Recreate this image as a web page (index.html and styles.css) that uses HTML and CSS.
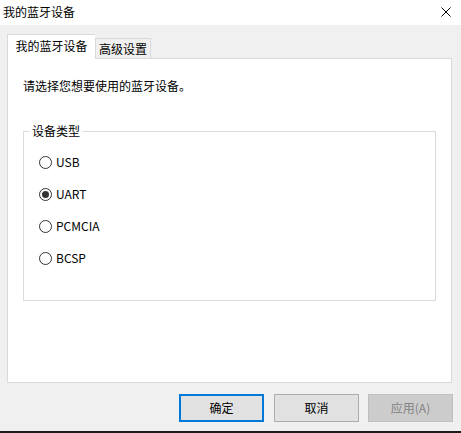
FILE: index.html
```html
<!DOCTYPE html>
<html lang="zh-CN">
<head>
<meta charset="utf-8">
<title>我的蓝牙设备</title>
<link rel="stylesheet" href="styles.css">
</head>
<body>
<div class="window">
  <div class="titlebar">
    <span class="title">我的蓝牙设备</span>
    <svg class="close" width="10" height="10" viewBox="0 0 10 10"><path d="M0.5 0.5 L9.5 9.5 M9.5 0.5 L0.5 9.5" stroke="#000" stroke-width="1"/></svg>
  </div>
  <div class="content">
    <div class="tabs">
      <div class="tab active">我的蓝牙设备</div>
      <div class="tab">高级设置</div>
    </div>
    <div class="panel">
      <p class="hint">请选择您想要使用的蓝牙设备。</p>
      <fieldset class="group">
        <legend>设备类型</legend>
        <div class="option"><span class="radio"></span><span>USB</span></div>
        <div class="option"><span class="radio checked"></span><span>UART</span></div>
        <div class="option"><span class="radio"></span><span>PCMCIA</span></div>
        <div class="option"><span class="radio"></span><span>BCSP</span></div>
      </fieldset>
    </div>
    <div class="buttons">
      <div class="btn default">确定</div>
      <div class="btn">取消</div>
      <div class="btn disabled">应用(A)</div>
    </div>
  </div>
  <div class="bottomline"></div>
</div>
</body>
</html>
```
FILE: styles.css
```css
* { box-sizing: border-box; }
html, body { margin: 0; padding: 0; }
body {
  width: 461px;
  height: 433px;
  overflow: hidden;
  font-family: "Noto Sans CJK SC", "Noto Sans", sans-serif;
  font-size: 12px;
  color: #000;
}
.window {
  width: 461px;
  height: 433px;
  display: flex;
  flex-direction: column;
  background: #f0f0f0;
}
.titlebar {
  height: 25px;
  background: #fff;
  display: flex;
  align-items: center;
  justify-content: space-between;
  padding: 0 10px 1px 3px;
}
.title { line-height: 16px; }
.close { display: block; margin-top: -1px; }
.content {
  flex: 1;
  padding: 9px 8px 0 7px;
  display: flex;
  flex-direction: column;
}
.tabs {
  display: flex;
  align-items: flex-end;
  height: 24px;
  position: relative;
  z-index: 1;
}
.tab {
  height: 20px;
  padding: 0;
  border: 1px solid #d9d9d9;
  border-bottom: none;
  background: #f0f0f0;
  display: flex;
  align-items: center;
  line-height: 16px;
  width: 56px;
  justify-content: center;
  white-space: nowrap;
}
.tab.active {
  height: 25px;
  width: 88px;
  background: #fff;
  margin-bottom: -1px;
  border-right: none;
  padding-bottom: 2px;
}
.panel {
  height: 325px;
  margin-top: 0;
  width: 445px;
  background: #fff;
  border: 1px solid #d9d9d9;
  padding: 19px 14px 0 15px;
}
.hint {
  margin: 0;
  line-height: 16px;
}
.group {
  margin: 29px 0 0 0;
  padding: 7px 0 0 15px;
  width: 413px;
  height: 178px;
  border: 1px solid #dcdcdc;
}
.group legend {
  margin-left: -9px;
  padding: 0 2px;
  line-height: 16px;
}
.option {
  display: flex;
  align-items: center;
  gap: 4px;
  height: 32px;
  line-height: 16px;
}
.radio {
  width: 13px;
  height: 13px;
  border: 1px solid #333;
  border-radius: 50%;
  display: flex;
  align-items: center;
  justify-content: center;
}
.radio.checked::after {
  content: "";
  width: 7px;
  height: 7px;
  border-radius: 50%;
  background: #333;
}
.buttons {
  display: flex;
  justify-content: flex-end;
  gap: 9px;
  margin-top: 11px;
}
.btn {
  width: 85px;
  height: 28px;
  border: 1px solid #adadad;
  background: #e1e1e1;
  display: flex;
  align-items: center;
  justify-content: center;
  line-height: 16px;
}
.btn.default {
  border: 2px solid #0078d7;
  margin-right: 1px;
}
.btn.disabled {
  background: #cccccc;
  border-color: #bfbfbf;
  color: #838383;
}
.bottomline {
  height: 2px;
  background: #1a1a1a;
}
```
